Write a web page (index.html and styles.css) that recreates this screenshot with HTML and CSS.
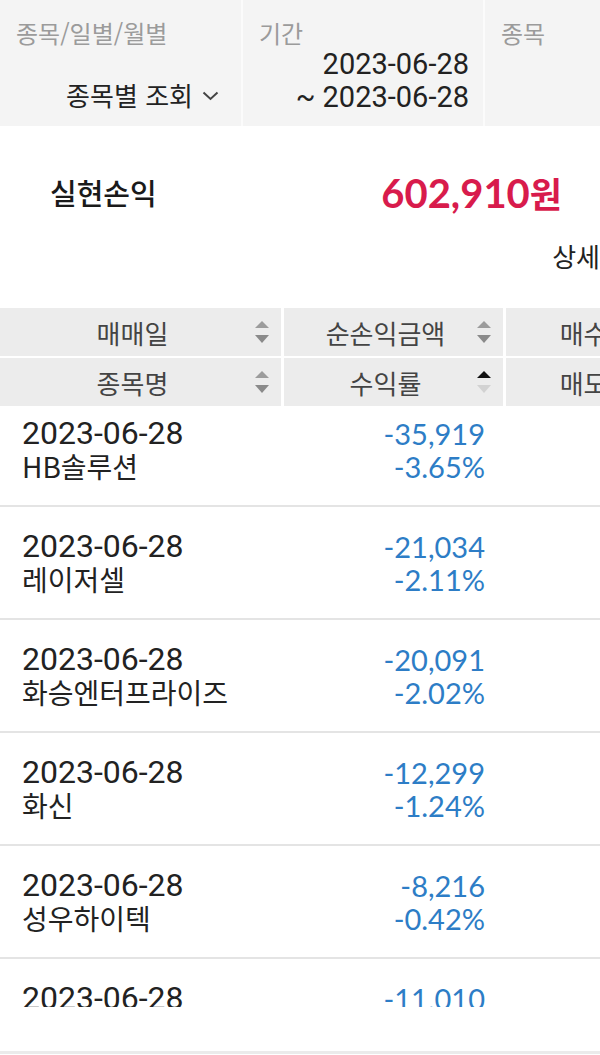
FILE: index.html
```html
<!DOCTYPE html>
<html lang="ko">
<head>
<meta charset="utf-8">
<title>실현손익</title>
<link rel="stylesheet" href="styles.css">
</head>
<body>
<div class="filter">
  <div class="fcol">
    <div class="flabel">종목/일별/월별</div>
    <div class="select">종목별 조회 <svg class="chev" width="17" height="10" viewBox="0 0 17 10"><polyline points="1.5,1.5 8.5,8 15.5,1.5" fill="none" stroke="#444" stroke-width="2"/></svg></div>
  </div>
  <div class="fcol">
    <div class="flabel">기간</div>
    <div class="dates"><div>2023-06-28</div><div>~ 2023-06-28</div></div>
  </div>
  <div class="fcol">
    <div class="flabel">종목</div>
  </div>
</div>

<div class="summary">
  <div class="total">
    <div class="total-label">실현손익</div>
    <div class="total-value">602,910<span class="won">원</span></div>
  </div>
  <div class="detail">상세</div>
</div>

<div class="thead">
  <div class="th"><span>매매일</span><svg width="14" height="22" viewBox="0 0 14 22"><polygon points="7,0 14,7 0,7" fill="#9c9c9c"/><polygon points="0,14 14,14 7,22" fill="#8a8a8a"/></svg></div>
  <div class="th"><span>순손익금액</span><svg width="14" height="22" viewBox="0 0 14 22"><polygon points="7,0 14,7 0,7" fill="#9c9c9c"/><polygon points="0,14 14,14 7,22" fill="#8a8a8a"/></svg></div>
  <div class="th"><span>매수금액</span><svg width="14" height="22" viewBox="0 0 14 22"><polygon points="7,0 14,7 0,7" fill="#9c9c9c"/><polygon points="0,14 14,14 7,22" fill="#8a8a8a"/></svg></div>
  <div class="th"><span>종목명</span><svg width="14" height="22" viewBox="0 0 14 22"><polygon points="7,0 14,7 0,7" fill="#9c9c9c"/><polygon points="0,14 14,14 7,22" fill="#8a8a8a"/></svg></div>
  <div class="th"><span>수익률</span><svg width="14" height="22" viewBox="0 0 14 22"><polygon points="7,0 14,7 0,7" fill="#111"/><polygon points="0,14 14,14 7,22" fill="#d2d2d2"/></svg></div>
  <div class="th"><span>매도금액</span><svg width="14" height="22" viewBox="0 0 14 22"><polygon points="7,0 14,7 0,7" fill="#9c9c9c"/><polygon points="0,14 14,14 7,22" fill="#8a8a8a"/></svg></div>
</div>

<div class="tbody">
  <div class="list">
    <div class="row">
      <div class="c1"><div class="date">2023-06-28</div><div class="name">HB솔루션</div></div>
      <div class="c2"><div>-35,919</div><div>-3.65%</div></div>
    </div>
    <div class="row">
      <div class="c1"><div class="date">2023-06-28</div><div class="name">레이저셀</div></div>
      <div class="c2"><div>-21,034</div><div>-2.11%</div></div>
    </div>
    <div class="row">
      <div class="c1"><div class="date">2023-06-28</div><div class="name">화승엔터프라이즈</div></div>
      <div class="c2"><div>-20,091</div><div>-2.02%</div></div>
    </div>
    <div class="row">
      <div class="c1"><div class="date">2023-06-28</div><div class="name">화신</div></div>
      <div class="c2"><div>-12,299</div><div>-1.24%</div></div>
    </div>
    <div class="row">
      <div class="c1"><div class="date">2023-06-28</div><div class="name">성우하이텍</div></div>
      <div class="c2"><div>-8,216</div><div>-0.42%</div></div>
    </div>
    <div class="row">
      <div class="c1"><div class="date">2023-06-28</div><div class="name">우리기술</div></div>
      <div class="c2"><div>-11,010</div><div>-1.10%</div></div>
    </div>
  </div>
</div>

<div class="footer"></div>
</body>
</html>
```

FILE: styles.css
```css
* { box-sizing: border-box; margin: 0; padding: 0; }
html, body { width: 600px; height: 1055px; overflow: hidden; background: #fff; }
body { font-family: "Noto Sans CJK KR", "Noto Sans", sans-serif; color: #222; }

.filter {
  display: grid;
  grid-template-columns: 241px 240px 1fr;
  column-gap: 2px;
  background: #fbfbfb;
  height: 126px;
}
.fcol { background: #f4f4f4; padding-left: 16px; }
.flabel { font-size: 24px; line-height: 26px; padding-top: 20px; color: #9b9b9b; }
.select {
  margin-top: 32px;
  height: 33px;
  font-size: 26px;
  line-height: 33px;
  padding-right: 22px;
  display: flex;
  justify-content: flex-end;
  align-items: center;
  gap: 9px;
  color: #222;
}
.chev { flex: none; margin-top: 2px; }
.dates {
  margin-top: 2px;
  font-family: Roboto, sans-serif;
  font-size: 29px;
  line-height: 33px;
  text-align: right;
  padding-right: 14px;
  color: #222;
}

.summary { padding: 40px 38px 0 50px; }
.total { display: flex; justify-content: space-between; align-items: center; height: 52px; }
.total-label { font-size: 29px; font-weight: 500; color: #1a1a1a; }
.total-value { color: #d81b4c; font-family: Lato, sans-serif; font-weight: 700; font-size: 40px; }
.won { font-family: "Noto Sans CJK KR", sans-serif; font-size: 35px; }
.detail {
  margin-top: 23px;
  height: 30px;
  line-height: 30px;
  font-size: 26px;
  text-align: right;
  margin-right: -38px;
  color: #222;
}

.thead {
  margin-top: 37px;
  display: grid;
  grid-template-columns: 281px 219px 219px;
  gap: 2px 3px;
  width: 725px;
  background: #fff;
}
.th {
  background: #ececec;
  height: 48px;
  display: flex;
  align-items: center;
  font-size: 26px;
  color: #444;
}
.th span { flex: 1; text-align: center; padding-left: 10px; }
.th svg { flex: none; margin-right: 12px; }

.tbody { height: 601px; overflow: hidden; }
.list { margin-top: -12px; }
.row {
  display: grid;
  grid-template-columns: 281px 219px;
  column-gap: 3px;
  padding: 23px 0 22px;
  border-bottom: 2px solid #e4e4e4;
}
.c1 { padding-left: 22px; }
.date { font-family: Roboto, sans-serif; font-size: 32px; line-height: 33px; color: #222; }
.name { font-size: 28px; line-height: 33px; color: #222; }
.c2 {
  text-align: right;
  padding-right: 18px;
  font-family: Lato, sans-serif;
  font-size: 29px;
  line-height: 33px;
  color: #2d7dc6;
}

.footer { margin-top: 44px; border-top: 3px solid #ebebeb; height: 100px; }
```
